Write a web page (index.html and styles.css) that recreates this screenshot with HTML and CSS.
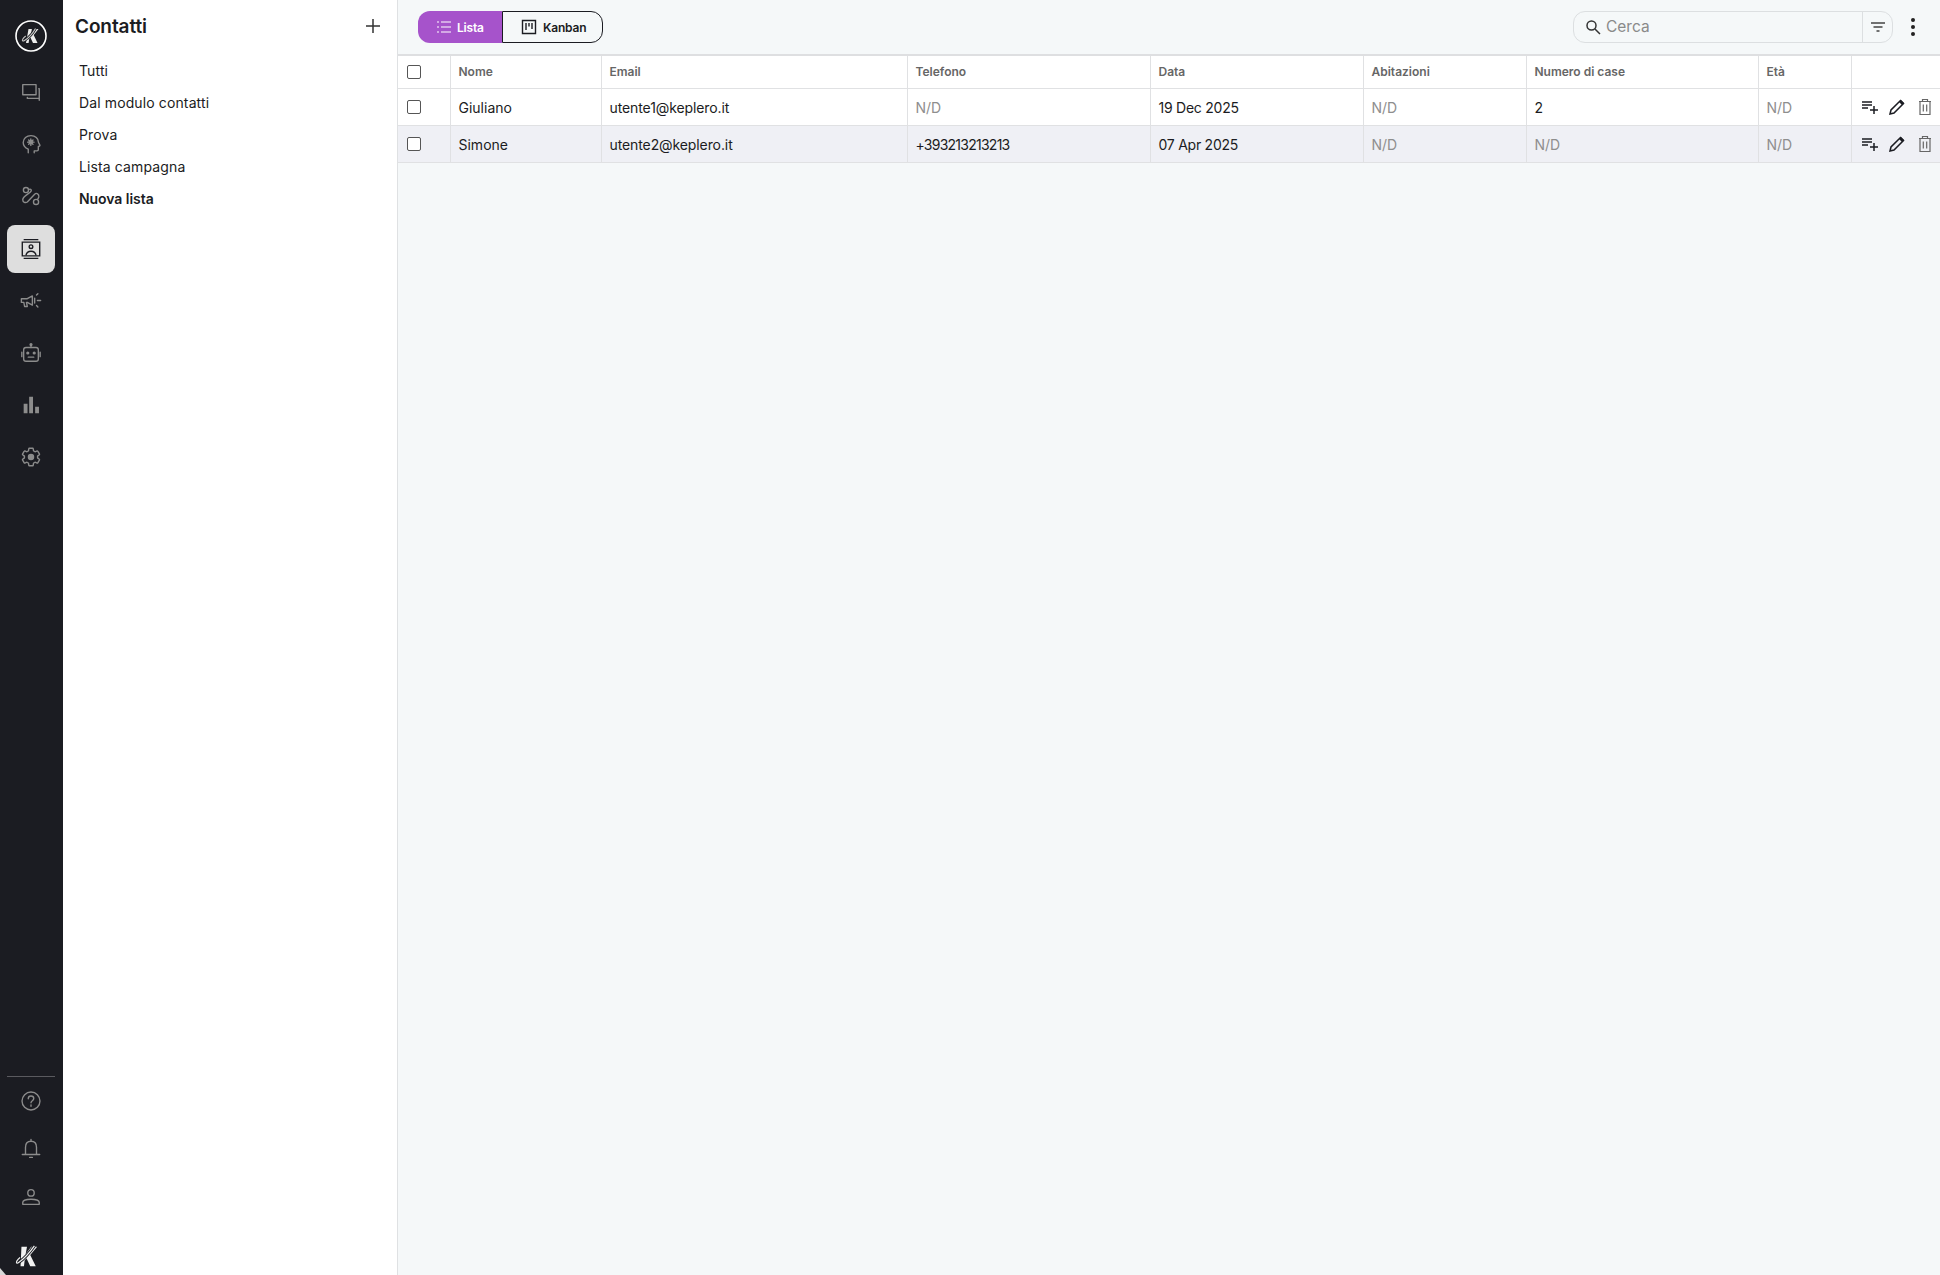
FILE: index.html
```html
<!DOCTYPE html>
<html lang="it">
<head>
<meta charset="utf-8">
<title>Contatti</title>
<link rel="stylesheet" href="styles.css">
</head>
<body>
<div class="app">
  <aside class="rail">
    <div class="brand">
      <svg class="brand-mark" viewBox="0 0 32 32" width="32" height="32">
        <circle cx="16" cy="16" r="15" fill="none" stroke="#fff" stroke-width="1.600"/>
        <path d="M13.500 9h3.400l-1 5.500L20 9h3.500l-4.800 6 3.800 8H18l-2.600-5.400-1.200 1.400-.6 4h-2.600z" fill="#ededed"/>
        <path d="M20.500 8.500c-2.500 4.500-7 9.500-11 12-1.800 1.100-2.600.2-1.800-1.300.6-1.200 1.600-2.200 3-3.200" fill="none" stroke="#1b1c22" stroke-width="2.600"/>
        <path d="M20.500 8.500c-2.500 4.500-7 9.500-11 12-1.800 1.100-2.600.2-1.800-1.300.6-1.200 1.600-2.200 3-3.200" fill="none" stroke="#c8c8c8" stroke-width="1.100"/>
      </svg>
    </div>
    <nav class="rail-nav">
      <a class="rail-btn"><svg viewBox="0 0 24 24" class="ic"><path d="M3 4h14.500v11H3zM20.500 8.500H21v12.500M21 19H8v-1"/></svg></a>
      <a class="rail-btn"><svg viewBox="0 0 24 24" class="ic"><path d="M9 21.500v-3.800C6 16.200 3.500 13.500 3.500 10.300 3.500 5.800 7.300 2.800 12 2.800c4.800 0 8 3.200 8 6.700 0 1 1.800 3.500 1.800 4.200 0 .5-1.800 1-1.800 1V18c0 .8-.7 1.500-1.500 1.500H15.500v2"/><circle cx="11.800" cy="10" r="1.800" fill="#8c8c8c"/><path d="M11.800 6.500v1M11.800 12.500v1M8.300 10h1M14.300 10h1M9.400 7.600l.6.600M13.600 11.800l.6.600M14.200 7.600l-.6.600M10 11.800l-.6.600"/></svg></a>
      <a class="rail-btn"><svg viewBox="0 0 24 24" class="ic"><circle cx="6.500" cy="5.500" r="2.800"/><circle cx="17.500" cy="18.500" r="2.800"/><path d="M9.300 5c2-1 3.200-.3 3 1.200-.4 3-9.300 5.300-9.300 9.800 0 3 3 3.800 5 2.500l8-8.500c2-2 5 0 4.500 3-.2 1-.5 1.500-1 2"/></svg></a>
      <a class="rail-btn is-active"><svg viewBox="0 0 24 24" class="ic ic-dark"><path d="M4 1.800h16M4 22.200h16M2.500 4.500h19v15h-19z"/><circle cx="12" cy="9.500" r="2"/><path d="M6.500 19c.5-3 2.700-4.500 5.500-4.500s5 1.500 5.500 4.500"/></svg></a>
      <a class="rail-btn"><svg viewBox="0 0 24 24" class="ic"><path d="M1.500 9.500h6.500l5.500-3v10l-5.500-3H7l1 4.500H5l-.8-4.500H1.500zM16 8.800v5.500M18 5.500l1.500-1.500M19 11.500h3.500M18 17l1.500 1.500"/></svg></a>
      <a class="rail-btn"><svg viewBox="0 0 24 24" class="ic"><rect x="4" y="6" width="16" height="15" rx="2.500"/><path d="M12 6V3.500M2 11v5M22 11v5M9 16.500h6"/><circle cx="12" cy="2.800" r="1" fill="#8c8c8c"/><circle cx="8.500" cy="12" r="1" fill="#8c8c8c"/><circle cx="15.500" cy="12" r="1" fill="#8c8c8c"/></svg></a>
      <a class="rail-btn"><svg viewBox="0 0 24 24" class="ic"><path class="solid" d="M4 10.500h4.200V21H4zM10 3h4.200v18H10zM16.500 14h4.200v7h-4.200z"/></svg></a>
      <a class="rail-btn"><svg viewBox="0 0 24 24" class="ic"><path d="M19.140 12.940c.04-.3.06-.61.06-.94 0-.32-.02-.64-.07-.94l2.030-1.580c.18-.14.23-.41.12-.61l-1.920-3.320c-.12-.22-.37-.29-.59-.22l-2.390.96c-.5-.38-1.030-.7-1.620-.94l-.36-2.540c-.04-.24-.24-.41-.48-.41h-3.840c-.24 0-.43.17-.47.41l-.36 2.540c-.59.24-1.130.57-1.620.94l-2.390-.96c-.22-.08-.47 0-.59.22L2.740 8.870c-.12.21-.08.47.12.61l2.030 1.580c-.05.3-.09.63-.09.94s.02.64.07.94l-2.030 1.580c-.18.14-.23.41-.12.61l1.920 3.320c.12.22.37.29.59.22l2.390-.96c.5.38 1.030.7 1.620.94l.36 2.540c.05.24.24.41.48.41h3.840c.24 0 .44-.17.47-.41l.36-2.540c.59-.24 1.130-.56 1.620-.94l2.390.96c.22.08.47 0 .59-.22l1.920-3.320c.12-.22.07-.47-.12-.61l-2.010-1.580z"/><circle cx="12" cy="12" r="2.800" fill="#8c8c8c"/></svg></a>
    </nav>
    <div class="rail-foot">
      <a class="foot-btn"><svg viewBox="0 0 24 24" class="ic"><circle cx="12" cy="12" r="9.800"/><path d="M9 9.500c0-2 1.400-3 3-3s3 1 3 2.800c0 2.400-3 2.400-3 4.700M12 16.200v1.500"/></svg></a>
      <a class="foot-btn"><svg viewBox="0 0 24 24" class="ic"><path d="M12 1.500v2M6 18V10c0-3.800 2.200-6.500 6-6.500s6 2.700 6 6.500v8M2.500 18h19M10.500 21.200h3"/></svg></a>
      <a class="foot-btn"><svg viewBox="0 0 24 24" class="ic"><circle cx="12" cy="7.500" r="3.500"/><path d="M3 20v-2c0-2 4-3.500 9-3.500s9 1.500 9 3.500v2z"/></svg></a>
      <div class="foot-logo">
        <svg viewBox="0 0 26 26" width="24" height="24">
          <path d="M7 3h6l-1.500 8 6-8H24l-7.500 9 6 12h-6l-4-8.500-2 2-.8 6.500H6z" fill="#f2f2f2"/>
          <path d="M21 2C16 9 10 16 4 20c-2 1.400-3 .5-2-1.500.8-1.500 2-3 3.500-4" fill="none" stroke="#1b1c22" stroke-width="3.400"/>
          <path d="M21 2C16 9 10 16 4 20c-2 1.400-3 .5-2-1.500.8-1.500 2-3 3.500-4" fill="none" stroke="#f2f2f2" stroke-width="1.300"/>
        </svg>
      </div>
    </div>
  </aside>

  <section class="panel">
    <header class="panel-head">
      <h1>Contatti</h1>
      <svg viewBox="0 0 16 16" width="16" height="16" class="plus"><path d="M8 1v14M1 8h14"/></svg>
    </header>
    <ul class="lists">
      <li>Tutti</li>
      <li>Dal modulo contatti</li>
      <li>Prova</li>
      <li>Lista campagna</li>
      <li class="is-strong">Nuova lista</li>
    </ul>
  </section>

  <main class="main">
    <div class="toolbar">
      <div class="switch">
        <button class="seg seg-on">
          <svg viewBox="0 0 16 16" width="16" height="16" class="seg-ic"><path d="M1 3h2M5 3h10M1 8h2M5 8h10M1 13h2M5 13h10"/></svg>Lista
        </button>
        <button class="seg seg-off">
          <svg viewBox="0 0 16 16" width="16" height="16" class="seg-ic"><path d="M1.500 1.500h13v13h-13zM5 4v7M8 4v3.500M11 4v6"/></svg>Kanban
        </button>
      </div>
      <div class="tools">
        <div class="search">
          <svg viewBox="0 0 16 16" width="16" height="16" class="search-ic"><circle cx="6.500" cy="6.500" r="4.500"/><path d="M10 10l5 5"/></svg>
          <span class="search-text">Cerca</span>
          <span class="filter"><svg viewBox="0 0 16 12" width="16" height="12" class="filter-ic"><path d="M1 2h14M3.500 6h9M6.500 10h3"/></svg></span>
        </div>
        <svg viewBox="0 0 6 20" width="6" height="20" class="more"><circle cx="3" cy="3" r="2"/><circle cx="3" cy="10" r="2"/><circle cx="3" cy="17" r="2"/></svg>
      </div>
    </div>
    <table class="grid">
      <colgroup>
        <col class="c-check"><col class="c-name"><col class="c-mail"><col class="c-tel"><col class="c-date"><col class="c-home"><col class="c-num"><col class="c-age"><col>
      </colgroup>
      <thead>
        <tr>
          <th><span class="box"></span></th><th>Nome</th><th>Email</th><th>Telefono</th><th>Data</th><th>Abitazioni</th><th>Numero di case</th><th>Età</th><th></th>
        </tr>
      </thead>
      <tbody>
        <tr>
          <td><span class="box"></span></td><td>Giuliano</td><td class="mail">utente1@keplero.it</td><td class="na">N/D</td><td class="date">19 Dec 2025</td><td class="na">N/D</td><td>2</td><td class="na">N/D</td>
          <td class="acts">
            <svg viewBox="0 0 18 18" class="act"><path d="M1 4h10M1 7h10M1 10h6M13 8v8M9 12h8"/></svg>
            <svg viewBox="0 0 18 18" class="act"><path d="M2 16l1-4L12.500 2.500l3 3L6 15z"/><path class="fill" d="M11 4l3 3 2-2-3-3z"/></svg>
            <svg viewBox="0 0 18 18" class="act act-del"><path d="M3 3.500h12M6.500 3.500V1.500h5v2M4 3.500h10V16.500H4zM7.300 6.500v7M10.700 6.500v7"/></svg>
          </td>
        </tr>
        <tr class="alt">
          <td><span class="box"></span></td><td>Simone</td><td class="mail">utente2@keplero.it</td><td class="phone">+393213213213</td><td class="date">07 Apr 2025</td><td class="na">N/D</td><td class="na">N/D</td><td class="na">N/D</td>
          <td class="acts">
            <svg viewBox="0 0 18 18" class="act"><path d="M1 4h10M1 7h10M1 10h6M13 8v8M9 12h8"/></svg>
            <svg viewBox="0 0 18 18" class="act"><path d="M2 16l1-4L12.500 2.500l3 3L6 15z"/><path class="fill" d="M11 4l3 3 2-2-3-3z"/></svg>
            <svg viewBox="0 0 18 18" class="act act-del"><path d="M3 3.500h12M6.500 3.500V1.500h5v2M4 3.500h10V16.500H4zM7.300 6.500v7M10.700 6.500v7"/></svg>
          </td>
        </tr>
      </tbody>
    </table>
  </main>
</div>
</body>
</html>
```

FILE: styles.css
```css
* { box-sizing: border-box; }
html, body { margin: 0; height: 100%; }
body {
  font-family: "Inter", "Noto Sans", sans-serif;
  color: #1b1c22;
  background: #f5f8f9;
  overflow: hidden;
}
.app { display: flex; height: 1275px; }

/* Left rail */
.rail {
  position: relative;
  width: 63px;
  flex: none;
  background: #1b1c22;
  display: flex;
  flex-direction: column;
  padding: 0 8px 0 7px;
}
.rail::after {
  content: "";
  position: absolute;
  left: 0;
  bottom: 0;
  width: 6px;
  height: 7px;
  background: #d8d8d8;
  clip-path: polygon(0 0, 100% 100%, 0 100%);
}
.brand { display: flex; justify-content: center; padding: 20px 0 16px; }
.brand-mark { display: block; }
.rail-nav { display: flex; flex-direction: column; gap: 4.2px; }
.rail-btn {
  height: 48px;
  display: flex;
  align-items: center;
  justify-content: center;
  border-radius: 8px;
}
.rail-btn.is-active { background: #dedede; }
.ic {
  width: 22px;
  height: 22px;
  fill: none;
  stroke: #8c8c8c;
  stroke-width: 1.500;
  stroke-linejoin: round;
  stroke-linecap: round;
}
.ic-dark { width: 22px; height: 22px; stroke: #1b1c22; stroke-width: 1.500; stroke-linecap: butt; stroke-linejoin: miter; }
.ic .solid { fill: #8c8c8c; stroke: none; }
.rail-foot {
  margin-top: auto;
  border-top: 1px solid #5a5a5f;
  display: flex;
  flex-direction: column;
}
.foot-btn {
  height: 48px;
  display: flex;
  align-items: center;
  justify-content: center;
}
.foot-logo {
  height: 54px;
  display: flex;
  align-items: flex-end;
  justify-content: center;
  padding-bottom: 7px;
}
.foot-logo svg { display: block; margin-left: -8px; }

/* Lists panel */
.panel {
  width: 335px;
  flex: none;
  background: #fff;
  border-right: 1px solid #dfe1e3;
  padding: 0 12px;
}
.panel-head {
  height: 54px;
  display: flex;
  align-items: center;
  justify-content: space-between;
  padding-bottom: 2px;
}
.panel-head h1 { margin: 0; font-size: 19px; font-weight: 600; letter-spacing: -.1px; }
.plus { fill: none; stroke: #333; stroke-width: 1.500; margin-right: 4px; }
.lists { list-style: none; margin: 1px 0 0; padding: 0 0 0 4px; }
.lists li { height: 32px; line-height: 32px; font-size: 14px; letter-spacing: .12px; color: #1b1c22; }
.lists li.is-strong { font-weight: 600; letter-spacing: -.05px; }

/* Main area */
.main { flex: 1; min-width: 0; }
.toolbar {
  height: 54px;
  display: flex;
  justify-content: space-between;
  align-items: flex-start;
  padding: 11px 20px 0 20px;
}
.switch { display: flex; }
.seg {
  height: 32px;
  display: flex;
  align-items: center;
  font: 600 12px "Inter", sans-serif;
  letter-spacing: -.2px;
  padding: 0;
  cursor: pointer;
}
.seg-on {
  width: 84px;
  background: #a653cb;
  color: #fff;
  border: 0;
  border-radius: 12px 0 0 12px;
  padding-left: 18px;
  gap: 5px;
}
.seg-off {
  width: 101px;
  background: transparent;
  color: #1b1c22;
  border: 1px solid #1b1c22;
  border-radius: 0 12px 12px 0;
  padding-left: 18px;
  gap: 6px;
}
.seg-ic { fill: none; stroke: currentColor; stroke-width: 1.400; flex: none; }
.seg-on .seg-ic { stroke-width: 1.200; }
.tools { display: flex; align-items: center; gap: 17px; height: 32px; }
.search {
  width: 320px;
  height: 32px;
  border: 1px solid #dcdfe1;
  border-radius: 12px;
  display: flex;
  align-items: center;
  padding-left: 11px;
}
.search-ic { fill: none; stroke: #333; stroke-width: 1.500; flex: none; }
.search-text { flex: 1; margin-left: 5px; padding-bottom: 2px; font-size: 15.500px; color: #8a8a8a; }
.filter {
  width: 30px;
  height: 100%;
  border-left: 1px solid #dcdfe1;
  display: flex;
  align-items: center;
  justify-content: center;
}
.filter-ic { fill: none; stroke: #444; stroke-width: 1.300; }
.more { fill: #222; margin-right: 4px; }

/* Table */
.grid {
  width: 1542px;
  table-layout: fixed;
  border-collapse: collapse;
  border-top: 2px solid #dedfe1;
}
.c-check { width: 52px; }
.c-name { width: 151px; }
.c-mail { width: 306px; }
.c-tel { width: 243px; }
.c-date { width: 213px; }
.c-home { width: 163px; }
.c-num { width: 232px; }
.c-age { width: 93px; }
.grid th, .grid td {
  padding: 0 8px;
  text-align: left;
  border: 1px solid #e0e1e3;
  border-top: 0;
  white-space: nowrap;
}
.grid th:first-child, .grid td:first-child { border-left: 0; padding-left: 9px; }
.grid th:last-child, .grid td:last-child { border-right: 0; }
.grid th { height: 33px; background: #fff; font-size: 12px; font-weight: 600; color: #666; }
.grid td { height: 37px; padding-top: 1px; background: #fff; font-size: 14px; color: #1b1c22; }
.grid tr.alt td { background: #eff0f5; }
.grid td.na { color: #8e8e8e; }
.grid td.mail { letter-spacing: -.1px; }
.grid td.date { letter-spacing: -.25px; }
.grid td.phone { letter-spacing: -.75px; }
.box {
  display: block;
  width: 14px;
  height: 14px;
  background: #fff;
  border: 1px solid #555;
  border-radius: 2px;
}
.grid td:first-child { padding-top: 0; }
.grid td.acts { padding: 0 0 0 9px; font-size: 0; }
.act {
  width: 18px;
  height: 18px;
  fill: none;
  stroke: #1b1c22;
  stroke-width: 1.500;
  margin-right: 9.500px;
  vertical-align: middle;
}
.act .fill { fill: #1b1c22; stroke: none; }
.act-del { stroke: #666; stroke-width: 1.200; margin-right: 0; }
```
